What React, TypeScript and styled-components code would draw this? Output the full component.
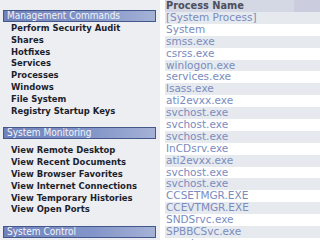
import React from "react";
import styled, { createGlobalStyle } from "styled-components";

const Global = createGlobalStyle`
  html, body { margin: 0; padding: 0; background: #ffffff; }
  #root { width: 320px; height: 240px; overflow: hidden; }
`;

const Page = styled.div`
  display: flex;
  width: 320px;
  height: 240px;
  overflow: hidden;
  background: #ffffff;
`;

const Sidebar = styled.nav`
  flex: 0 0 160px;
  background: #eceef1;
  padding: 10px 4px 0 3px;
  box-sizing: border-box;
  display: flex;
  flex-direction: column;
`;

const SectionHeader = styled.div`
  height: 12px;
  box-sizing: border-box;
  border: 1px solid #44578a;
  background: linear-gradient(to right, #6f82bb 0%, #8496c9 60%, #a5b2d6 100%);
  color: #f2f4fb;
  font-family: "DejaVu Sans Condensed", "DejaVu Sans", sans-serif;
  font-stretch: condensed;
  font-size: 10px;
  line-height: 10px;
  padding-left: 3px;
  white-space: nowrap;
  overflow: hidden;
`;

const ItemList = styled.ul<{ $top: number; $bottom: number }>`
  list-style: none;
  margin: 0;
  padding: ${(p) => p.$top}px 0 ${(p) => p.$bottom}px 8px;
`;

const Item = styled.li`
  font-family: "DejaVu Sans Condensed", "DejaVu Sans", sans-serif;
  font-stretch: condensed;
  font-weight: bold;
  font-size: 9.4px;
  line-height: 11.8px;
  height: 11.8px;
  color: #1c1f2e;
  white-space: nowrap;
`;

const Main = styled.main`
  flex: 1;
  margin-left: 5px;
  display: flex;
  flex-direction: column;
`;

const HeaderRow = styled.div`
  display: flex;
  height: 12px;
  background: #d4d7e4;
`;

const HeaderCell = styled.div<{ $shade?: boolean }>`
  flex: ${(p) => (p.$shade ? "0 0 25px" : "1")};
  background: ${(p) => (p.$shade ? "#cbcddf" : "transparent")};
  font-family: "DejaVu Sans", sans-serif;
  font-weight: bold;
  font-size: 9.8px;
  line-height: 12px;
  color: #4d4e5c;
  padding-left: 1px;
  white-space: nowrap;
`;

const Row = styled.div<{ $alt: boolean }>`
  height: 11.9px;
  line-height: 11.9px;
  background: ${(p) => (p.$alt ? "#e6e9ee" : "#ffffff")};
  font-family: "DejaVu Sans", sans-serif;
  font-size: 10.5px;
  color: #7a8cc0;
  padding-left: 1px;
  white-space: nowrap;
`;

const management = [
  "Perform Security Audit",
  "Shares",
  "Hotfixes",
  "Services",
  "Processes",
  "Windows",
  "File System",
  "Registry Startup Keys",
];

const monitoring = [
  "View Remote Desktop",
  "View Recent Documents",
  "View Browser Favorites",
  "View Internet Connections",
  "View Temporary Histories",
  "View Open Ports",
];

const processes = [
  "[System Process]",
  "System",
  "smss.exe",
  "csrss.exe",
  "winlogon.exe",
  "services.exe",
  "lsass.exe",
  "ati2evxx.exe",
  "svchost.exe",
  "svchost.exe",
  "svchost.exe",
  "InCDsrv.exe",
  "ati2evxx.exe",
  "svchost.exe",
  "svchost.exe",
  "CCSETMGR.EXE",
  "CCEVTMGR.EXE",
  "SNDSrvc.exe",
  "SPBBCSvc.exe",
  "spoolsv.exe",
];

export default function App() {
  return (
    <>
      <Global />
      <Page>
        <Sidebar>
          <SectionHeader>Management Commands</SectionHeader>
          <ItemList $top={0} $bottom={11}>
            {management.map((m) => (
              <Item key={m}>{m}</Item>
            ))}
          </ItemList>
          <SectionHeader>System Monitoring</SectionHeader>
          <ItemList $top={5} $bottom={11}>
            {monitoring.map((m) => (
              <Item key={m}>{m}</Item>
            ))}
          </ItemList>
          <SectionHeader>System Control</SectionHeader>
        </Sidebar>
        <Main>
          <HeaderRow>
            <HeaderCell>Process Name</HeaderCell>
            <HeaderCell $shade />
          </HeaderRow>
          {processes.map((p, i) => (
            <Row key={i} $alt={i % 2 === 0}>
              {p}
            </Row>
          ))}
        </Main>
      </Page>
    </>
  );
}
